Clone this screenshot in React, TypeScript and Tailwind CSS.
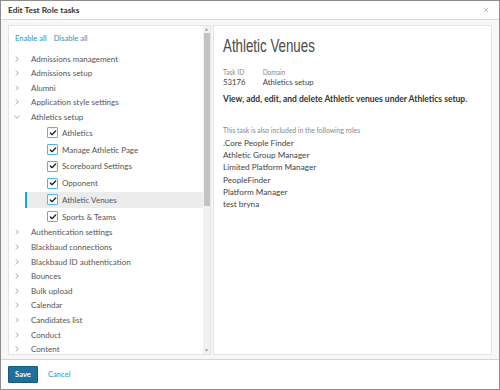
import { Check, X } from 'lucide-react';

const TOP_BEFORE = ['Admissions management', 'Admissions setup', 'Alumni', 'Application style settings'];
const CHILDREN = ['Athletics', 'Manage Athletic Page', 'Scoreboard Settings', 'Opponent', 'Athletic Venues', 'Sports & Teams'];
const TOP_AFTER = [
  'Authentication settings',
  'Blackbaud connections',
  'Blackbaud ID authentication',
  'Bounces',
  'Bulk upload',
  'Calendar',
  'Candidates list',
  'Conduct',
  'Content',
];
const ROLES = ['.Core People Finder', 'Athletic Group Manager', 'Limited Platform Manager', 'PeopleFinder', 'Platform Manager', 'test bryna'];

function Chevron({ open = false }: { open?: boolean }) {
  return (
    <svg width="6" height="6" viewBox="0 0 6 6" className="shrink-0">
      {open ? (
        <polyline points="0.5,1.8 3,4.2 5.5,1.8" fill="none" stroke="#9a9a9a" strokeWidth="0.9" />
      ) : (
        <polyline points="1.8,0.5 4.2,3 1.8,5.5" fill="none" stroke="#9a9a9a" strokeWidth="0.9" />
      )}
    </svg>
  );
}

function TopRow({ label, open = false }: { label: string; open?: boolean }) {
  return (
    <div className="flex h-[14.6px] items-center pl-[5px]">
      <Chevron open={open} />
      <span className="ml-[11px] text-[8px] text-[#555]">{label}</span>
    </div>
  );
}

function ChildRow({ label, selected }: { label: string; selected: boolean }) {
  return (
    <div
      className={
        selected
          ? 'relative ml-[16px] flex h-[16.8px] items-center bg-[#ececec] pl-[22px]'
          : 'relative ml-[16px] flex h-[16.8px] items-center pl-[22px]'
      }
    >
      {selected && <div className="absolute left-0 top-0 h-full w-[2px] bg-[#1aa3dc]" />}
      <div className="flex h-[11px] w-[11px] items-center justify-center rounded-[1px] border-[1.5px] border-[#4bb8e8] bg-white">
        <Check size={8} strokeWidth={4} color="#222" />
      </div>
      <span className="ml-[4px] text-[8px] text-[#555]">{label}</span>
    </div>
  );
}

export default function App() {
  return (
    <div className="flex h-[390px] w-[500px] flex-col border border-[#8c8c8c] bg-white font-['Lato',sans-serif]">
      {/* Header */}
      <div className="flex h-[19px] shrink-0 items-center justify-between border-b border-[#dcdcdc] px-[7px]">
        <span className="text-[8.4px] font-bold text-[#333]">Edit Test Role tasks</span>
        <X size={8} strokeWidth={2.5} color="#b5b5b5" className="mr-[2px]" />
      </div>

      {/* Body */}
      <div className="flex min-h-0 flex-1 gap-[2px] bg-[#f7f7f7] px-[7px] pb-[4px] pt-[5px]">
        {/* Left tree */}
        <div className="flex w-[203px] shrink-0 border border-[#e3e3e3] bg-white">
          <div className="flex-1 overflow-hidden">
            <div className="flex gap-[7px] pl-[6px] pt-[7px] text-[7.6px] text-[#2a93c6]">
              <span>Enable all</span>
              <span>Disable all</span>
            </div>
            <div className="pt-[7px]">
              {TOP_BEFORE.map((t) => (
                <TopRow key={t} label={t} />
              ))}
              <TopRow label="Athletics setup" open />
              {CHILDREN.map((c) => (
                <ChildRow key={c} label={c} selected={c === 'Athletic Venues'} />
              ))}
              {TOP_AFTER.map((t) => (
                <TopRow key={t} label={t} />
              ))}
            </div>
          </div>
          {/* Scrollbar */}
          <div className="flex w-[7px] shrink-0 flex-col items-center bg-[#f1f1f1]">
            <svg width="5" height="5" viewBox="0 0 5 5" className="mt-[1px]">
              <polygon points="2.5,1.5 4.2,3.5 0.8,3.5" fill="#8a8a8a" />
            </svg>
            <div className="mt-[1px] h-[173px] w-[6px] bg-[#c3c3c3]" />
            <div className="flex-1" />
            <svg width="5" height="5" viewBox="0 0 5 5" className="mb-[1px]">
              <polygon points="0.8,1.5 4.2,1.5 2.5,3.5" fill="#8a8a8a" />
            </svg>
          </div>
        </div>

        {/* Right details */}
        <div className="flex-1 border border-[#e3e3e3] bg-white pl-[9px] pt-[9px] text-[#444]">
          <h1 className="origin-left scale-x-[0.74] font-['Liberation_Sans_Narrow','Liberation_Sans',sans-serif] text-[18px] leading-[22px] text-[#4a4a4a]">
            Athletic Venues
          </h1>
          <div className="mt-[10px] flex gap-[17px] text-[7.8px] leading-[10px]">
            <div className="flex flex-col">
              <span className="text-[6.6px] text-[#888]">Task ID</span>
              <span className="text-[#444]">53176</span>
            </div>
            <div className="flex flex-col">
              <span className="text-[6.6px] text-[#888]">Domain</span>
              <span className="text-[#444]">Athletics setup</span>
            </div>
          </div>
          <p className="mt-[6px] text-[8.5px] font-bold text-[#333]">
            View, add, edit, and delete Athletic venues under Athletics setup.
          </p>
          <p className="mt-[19px] text-[6.8px] text-[#888]">This task is also included in the following roles</p>
          <div className="mt-[2px] flex flex-col text-[8.2px] leading-[12.2px] text-[#444]">
            {ROLES.map((r) => (
              <span key={r}>{r}</span>
            ))}
          </div>
        </div>
      </div>

      {/* Footer */}
      <div className="flex h-[30px] shrink-0 items-center gap-[10px] border-t border-[#d5d5d5] px-[7px]">
        <button className="h-[17px] w-[30px] rounded-[1px] border border-[#125a80] bg-[#1d6f9c] text-[7.6px] font-bold text-white">
          Save
        </button>
        <span className="text-[7.6px] text-[#2a93c6]">Cancel</span>
      </div>
    </div>
  );
}
